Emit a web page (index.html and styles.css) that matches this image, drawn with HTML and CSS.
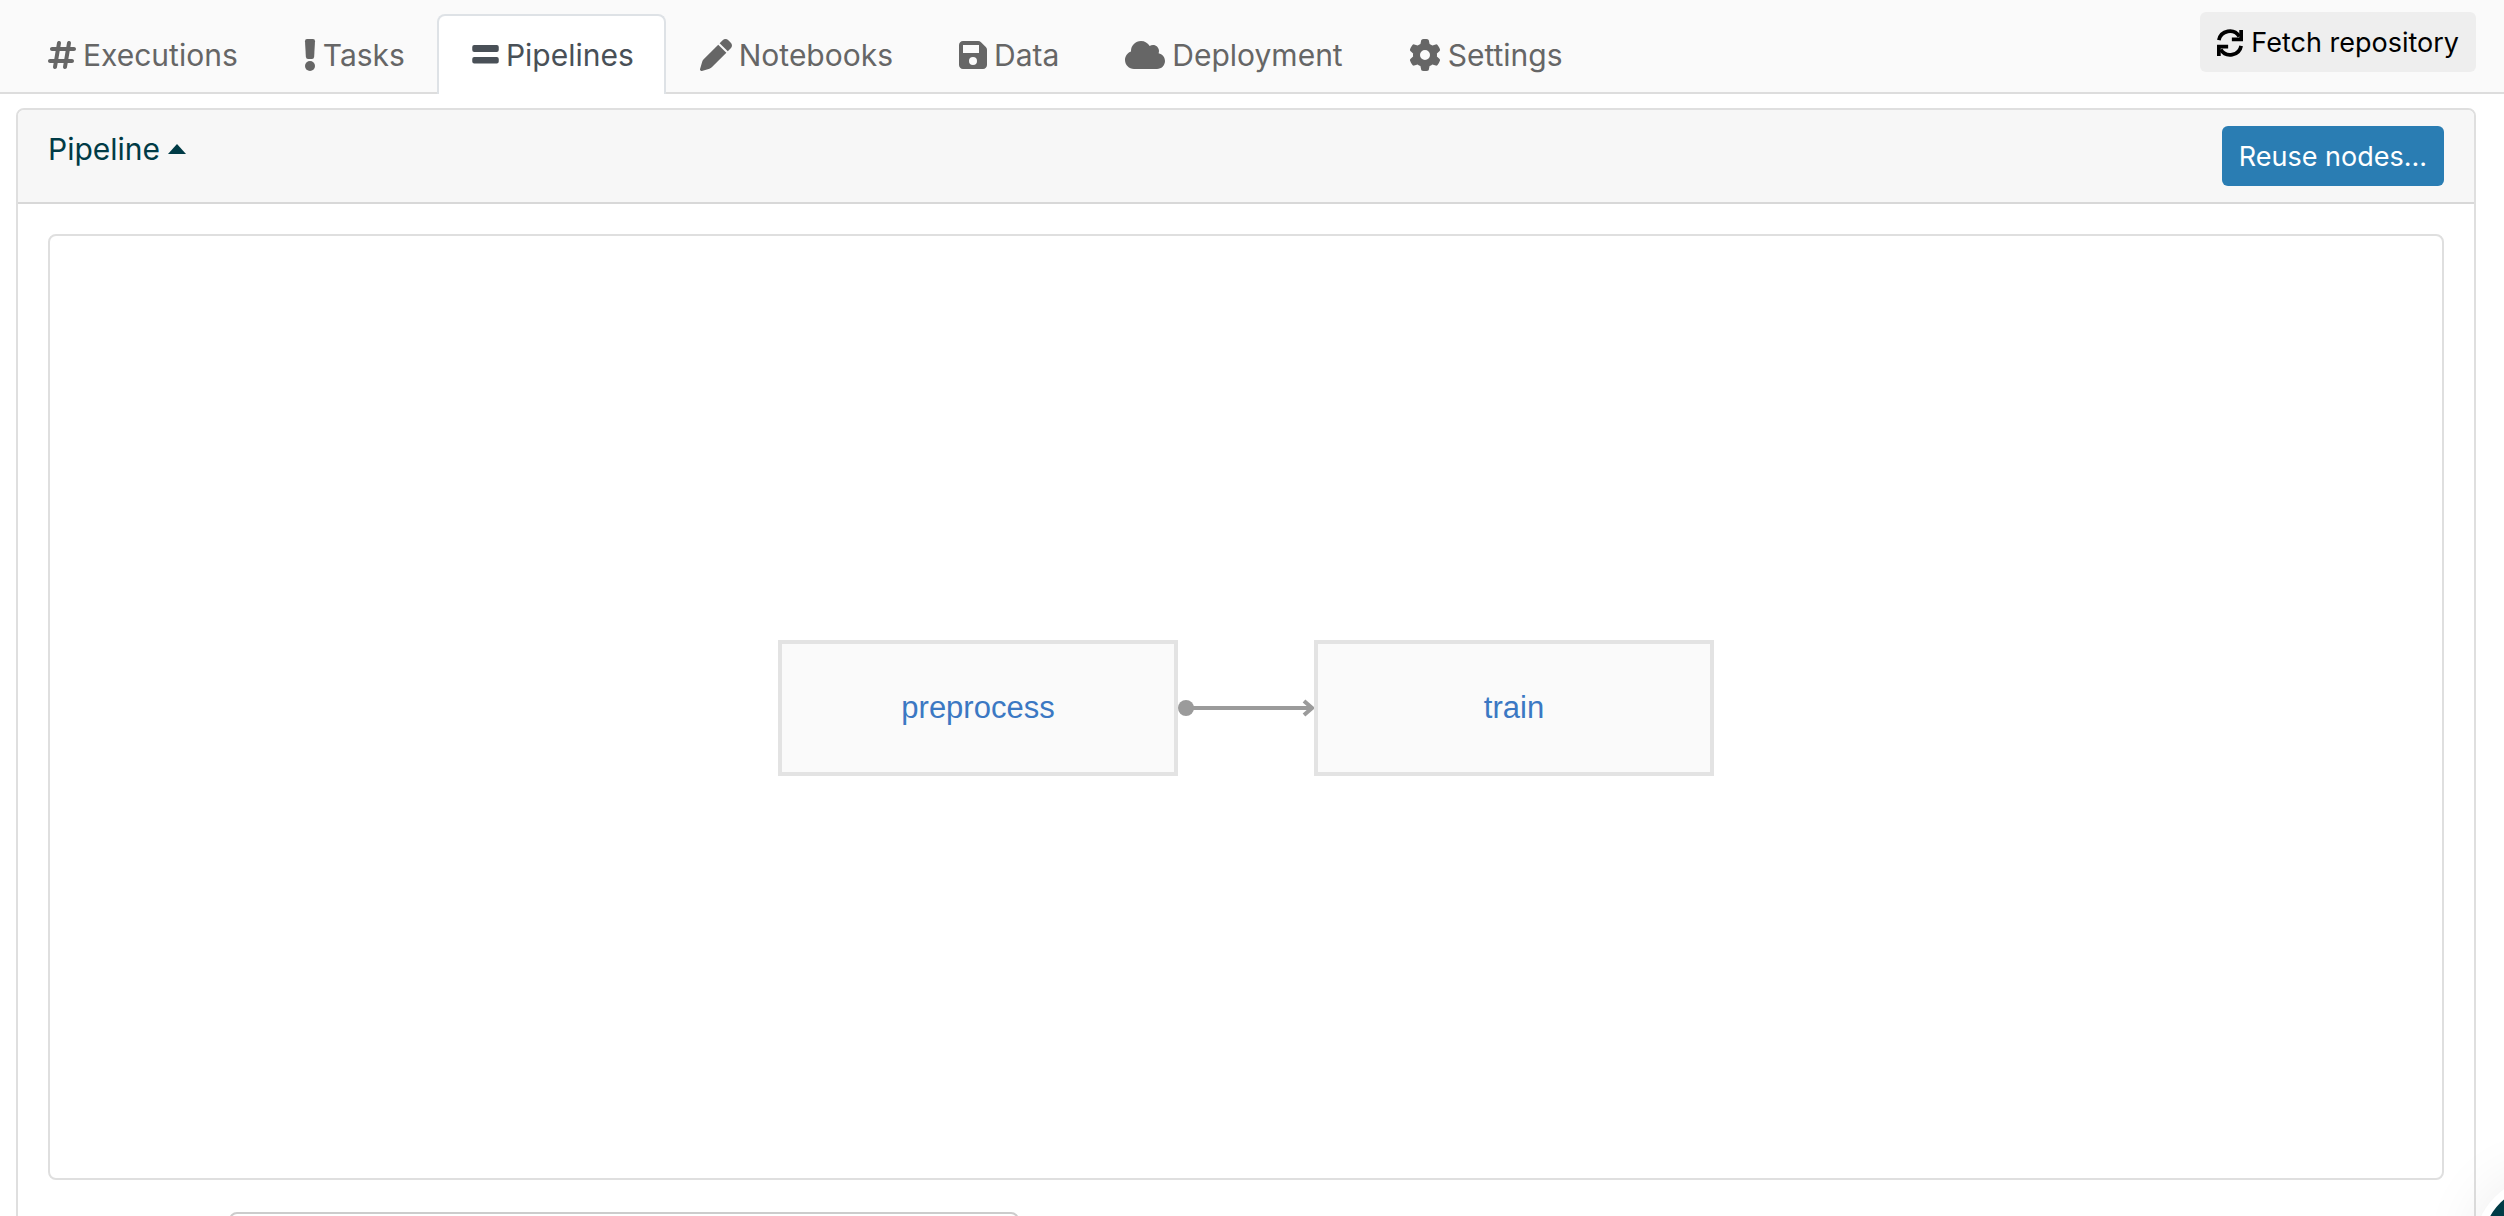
FILE: index.html
```html
<!DOCTYPE html>
<html lang="en">
<head>
<meta charset="utf-8">
<title>Pipelines</title>
<link rel="stylesheet" href="styles.css">
</head>
<body>
<header class="topbar">
  <nav class="tabs" aria-label="Project">
    <a class="tab" href="#executions"><svg class="icon w28" viewBox="0 0 448 512"><path d="M181.300 32.400c17.400 2.900 29.200 19.400 26.300 36.800L197.800 128h95.100l11.500-69.300c2.900-17.400 19.400-29.200 36.800-26.300s29.200 19.400 26.300 36.800L357.800 128H416c17.700 0 32 14.300 32 32s-14.300 32-32 32h-68.900L325.800 320H384c17.700 0 32 14.300 32 32s-14.300 32-32 32h-68.900l-11.500 69.300c-2.900 17.400-19.400 29.200-36.800 26.300s-29.200-19.400-26.300-36.800l9.800-58.700h-95.200l-11.500 69.300c-2.900 17.400-19.400 29.200-36.800 26.300s-29.200-19.400-26.300-36.800L90.200 384H32c-17.700 0-32-14.300-32-32s14.300-32 32-32h68.900l21.300-128H64c-17.700 0-32-14.300-32-32s14.300-32 32-32h68.900l11.500-69.300c2.900-17.400 19.400-29.200 36.800-26.300zM187.100 192L165.800 320h95.100l21.300-128h-95.100z"/></svg>Executions</a>
    <a class="tab" href="#tasks"><svg class="icon w12" viewBox="0 0 192 512"><path d="M16 34Q15 0 48 0H144Q177 0 176 34L162 286Q159 320 128 320H64Q33 320 30 286Z"/><circle cx="96" cy="432" r="80"/></svg>Tasks</a>
    <a class="tab active" href="#pipelines" aria-current="page"><svg class="icon w28" viewBox="0 0 448 512"><path d="M52 96h360q32 0 32 32v48q0 32-32 32H52q-32 0-32-32v-48q0-32 32-32zm0 192h360q32 0 32 32v40q0 32-32 32H52q-32 0-32-32v-40q0-32 32-32z"/></svg>Pipelines</a>
    <a class="tab" href="#notebooks"><svg class="icon w32" viewBox="0 0 512 512"><path d="M362.700 19.300L314.300 67.700 444.300 197.700l48.400-48.400c25-25 25-65.500 0-90.500L453.300 19.300c-25-25-65.500-25-90.500 0zm-71 71L58.600 323.500c-10.400 10.400-18 23.300-22.200 37.400L1 481.200c-2.500 8.500-.2 17.600 6 23.800s15.300 8.500 23.700 6.100L151 475.700c14.100-4.200 27-11.800 37.400-22.200L421.700 220.300 291.700 90.300z"/></svg>Notebooks</a>
    <a class="tab" href="#data"><svg class="icon w28" viewBox="0 0 448 512"><path fill-rule="evenodd" d="M64 32C28.700 32 0 60.700 0 96v320c0 35.300 28.700 64 64 64h320c35.300 0 64-28.700 64-64V173.300c0-17-6.700-33.300-18.700-45.300L352 50.700C340 38.700 323.700 32 306.700 32H64zm0 64h256v128H64zM224 288a64 64 0 1 1 0 128 64 64 0 1 1 0-128z"/></svg>Data</a>
    <a class="tab" href="#deployment"><svg class="icon w40" viewBox="0 0 640 512"><path d="M0 336c0 79.500 64.500 144 144 144h368c70.700 0 128-57.300 128-128 0-61.900-44-113.600-102.400-125.400 4.100-10.700 6.400-22.400 6.400-34.600 0-53-43-96-96-96-19.700 0-38.100 6-53.300 16.200C367 64.200 315.300 32 256 32 167.600 32 96 103.600 96 192c0 2.700.1 5.400.2 8.100C40.200 219.800 0 273.200 0 336z"/></svg>Deployment</a>
    <a class="tab" href="#settings"><svg class="icon w32" viewBox="0 0 512 512"><path d="M495.900 166.600c3.200 8.700.5 18.400-6.400 24.600l-43.300 39.400c1.100 8.300 1.700 16.800 1.700 25.400s-.6 17.100-1.700 25.400l43.300 39.400c6.900 6.200 9.600 15.900 6.400 24.600-4.400 11.900-9.700 23.300-15.800 34.300l-4.700 8.100c-6.600 11-14 21.400-22.100 31.200-5.900 7.200-15.700 9.600-24.500 6.800l-55.700-17.700c-13.400 10.300-28.200 18.900-44 25.400l-12.500 57.100c-2 9.100-9 16.300-18.200 17.800-13.800 2.300-28 3.500-42.500 3.500s-28.700-1.200-42.500-3.500c-9.200-1.500-16.200-8.700-18.200-17.800l-12.500-57.100c-15.800-6.500-30.600-15.100-44-25.400L83.100 425.900c-8.800 2.800-18.600.3-24.500-6.800-8.100-9.800-15.500-20.200-22.100-31.200l-4.700-8.100c-6.100-11-11.400-22.400-15.800-34.300-3.200-8.700-.5-18.400 6.400-24.600l43.300-39.400C64.600 273.100 64 264.600 64 256s.6-17.100 1.700-25.400L22.400 191.200c-6.900-6.200-9.600-15.900-6.400-24.600 4.400-11.900 9.700-23.300 15.800-34.300l4.700-8.100c6.600-11 14-21.400 22.100-31.200 5.900-7.200 15.700-9.600 24.500-6.800l55.700 17.700c13.400-10.300 28.200-18.900 44-25.400l12.500-57.100c2-9.100 9-16.300 18.200-17.800C227.300 1.200 241.500 0 256 0s28.700 1.200 42.500 3.500c9.200 1.500 16.200 8.700 18.200 17.800l12.500 57.100c15.800 6.500 30.600 15.100 44 25.400l55.700-17.700c8.800-2.800 18.600-.3 24.500 6.800 8.100 9.800 15.500 20.200 22.100 31.200l4.700 8.100c6.100 11 11.400 22.400 15.800 34.300zM256 336a80 80 0 1 0 0-160 80 80 0 1 0 0 160z"/></svg>Settings</a>
  </nav>
  <button class="btn btn-light" type="button"><svg class="icon w26" viewBox="0 0 28 28"><path class="stroke" d="M2 11A12 12 0 0 1 24 7M26 17A12 12 0 0 1 4 21"/><path d="M28 0V12H16V8H24V0ZM0 28V16H12V20H4V28Z"/></svg>Fetch repository</button>
</header>
<main class="card">
  <div class="card-header">
    <button class="card-title" type="button" aria-expanded="true">Pipeline<span class="caret"></span></button>
    <button class="btn btn-primary" type="button">Reuse nodes...</button>
  </div>
  <div class="card-body">
    <div class="graph">
      <div class="node">preprocess</div>
      <svg class="edge" viewBox="0 0 136 20"><circle cx="8" cy="10" r="8"/><path d="M8 10H134M126 3L134 10L126 17"/></svg>
      <div class="node">train</div>
    </div>
    <input class="field" type="text" aria-label="Pipeline name">
  </div>
</main>
<button class="chat" type="button" aria-label="Open chat"></button>
</body>
</html>
```
FILE: styles.css
```css
* { box-sizing: border-box; }

body {
  margin: 0;
  height: 100vh;
  overflow: hidden;
  background: #fff;
  font: 30px/46px Inter, "Liberation Sans", sans-serif;
}

button, input { font: inherit; }

.topbar {
  display: flex;
  justify-content: space-between;
  align-items: flex-start;
  height: 94px;
  padding: 12px 28px 0 14px;
  background: #fafafa;
  border-bottom: 2px solid #ddd;
}

.tabs { display: flex; padding-top: 2px; }

.tab {
  display: flex;
  align-items: center;
  gap: 7px;
  height: 80px;
  padding: 0 30px 0 32px;
  border: 2px solid transparent;
  border-bottom: 0;
  border-radius: 8px 8px 0 0;
  color: #666;
  text-decoration: none;
}

.tab.active {
  background: #fff;
  border-color: #dee2e6;
  color: #495057;
}

.icon { height: 32px; fill: currentColor; flex: none; }
.w12 { width: 12px; }
.w26 { width: 26px; }
.w28 { width: 28px; }
.w32 { width: 32px; }
.w40 { width: 40px; }
.stroke { fill: none; stroke: currentColor; stroke-width: 4; }

.btn {
  display: flex;
  align-items: center;
  gap: 8px;
  height: 60px;
  padding: 2px 17px 0;
  border: 0;
  border-radius: 6px;
  font-size: 27px;
}

.btn-light { background: #eee; color: #000; }
.btn-primary { background: #2a7db3; color: #fff; }

.card {
  margin: 14px 28px 0 16px;
  border: 2px solid #dfdfdf;
  border-radius: 8px;
}

.card-header {
  display: flex;
  justify-content: space-between;
  align-items: flex-start;
  padding: 16px 30px;
  background: #f7f7f7;
  border-bottom: 2px solid #d8d8d8;
  border-radius: 6px 6px 0 0;
}

.card-title {
  display: flex;
  align-items: center;
  gap: 8px;
  padding: 0;
  border: 0;
  background: none;
  color: #003b46;
}

.caret {
  border: 9px solid transparent;
  border-top: 0;
  border-bottom: 10px solid #003b46;
}

.card-body {
  display: flex;
  flex-direction: column;
  gap: 32px;
  padding: 30px;
}

.graph {
  display: flex;
  justify-content: center;
  align-items: center;
  min-height: 946px;
  padding-top: 2px;
  border: 2px solid #dfdfdf;
  border-radius: 8px;
}

.node {
  display: flex;
  justify-content: center;
  align-items: center;
  width: 400px;
  height: 136px;
  background: #fafafa;
  border: 4px solid #e3e3e3;
  color: #3b78c3;
  font: 31px/36px "Liberation Sans", Arial, sans-serif;
}

.edge { width: 136px; height: 20px; fill: #9b9b9b; }
.edge path { fill: none; stroke: #9b9b9b; stroke-width: 4; }

.field {
  width: 790px;
  height: 76px;
  margin-left: 181px;
  border: 2px solid #ccc;
  border-radius: 8px;
}

.chat {
  position: fixed;
  right: -107px;
  bottom: -97px;
  width: 136px;
  height: 136px;
  border: 8px solid #fff;
  border-radius: 50%;
  background: #003b46;
  box-shadow: 0 0 60px rgba(0, 0, 0, .08);
}
```
